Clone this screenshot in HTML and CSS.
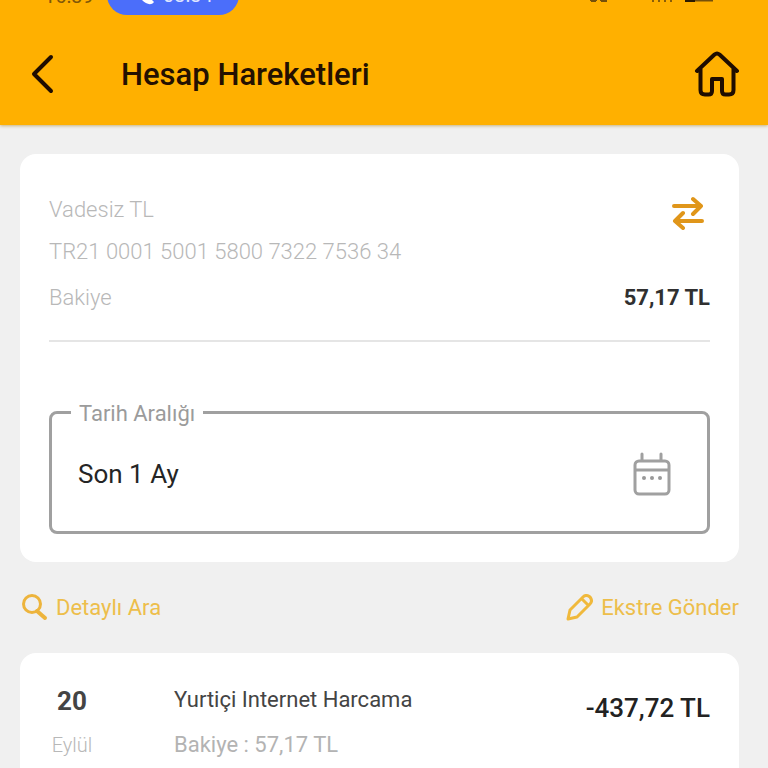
FILE: index.html
```html
<!DOCTYPE html>
<html lang="tr">
<head>
<meta charset="utf-8">
<meta name="viewport" content="width=device-width, initial-scale=1">
<title>Hesap Hareketleri</title>
<link rel="stylesheet" href="styles.css">
</head>
<body>
<header class="top">
  <div class="status">
    <span class="clock">16:39</span>
    <span class="call">
      <svg width="20" height="20" viewBox="0 0 20 20" aria-hidden="true"><path d="M4 1 C1 4 3 11 7 15 C11 19 16 21 19 17 L15 13 L12 15 L6 8 L8 5 Z" fill="#fff"/></svg>
      <span>03:34</span>
    </span>
    <svg class="signals" width="130" height="16" viewBox="0 0 130 16" aria-hidden="true"><path d="M5 3v11M10 3v11M15 3v11M20 3v11M5 14h5M15 14h6" stroke="#75500a" stroke-width="2" fill="none"/><path d="M67 8v7M73 6v9M79 4v11M85 2v13" stroke="#8a5e08" stroke-width="2"/><path d="M99 13h28" stroke="#75500a" stroke-width="3"/><path d="M99 13h10" stroke="#2b1a00" stroke-width="4"/></svg>
  </div>
  <nav class="bar">
    <button class="icon" type="button" aria-label="Geri"><svg width="24" height="40" viewBox="0 0 24 40"><path d="M21 3 4 20l17 17" fill="none" stroke="#1f0d00" stroke-width="4" stroke-linecap="round" stroke-linejoin="round"/></svg></button>
    <h1>Hesap Hareketleri</h1>
    <button class="icon" type="button" aria-label="Ana sayfa"><svg width="46" height="46" viewBox="0 0 46 46"><path d="M3 20 20.500 3.500Q23 1.500 25.500 3.500L43 20M6.500 17V39Q6.500 43.500 11 43.500H14.500Q18 43.500 18 40V28H28V40Q28 43.500 31.500 43.500H35Q39.500 43.500 39.500 39V17" fill="none" stroke="#1f0d00" stroke-width="4" stroke-linecap="round" stroke-linejoin="round"/></svg></button>
  </nav>
</header>
<main>
  <section class="card account">
    <div class="row first">
      <p class="muted">Vadesiz TL</p>
      <button class="icon" type="button" aria-label="Hesap değiştir"><svg width="32" height="34" viewBox="0 0 32 34"><path d="M2 10H29M21 3l8 7-8 8M30 25H3M11 17l-8 8 8 7" fill="none" stroke="#e0961a" stroke-width="4" stroke-linecap="round" stroke-linejoin="round"/></svg></button>
    </div>
    <p class="muted iban">TR21 0001 5001 5800 7322 7536 34</p>
    <div class="row balance">
      <p class="muted">Bakiye</p>
      <p class="sum">57,17 TL</p>
    </div>
    <fieldset class="range">
      <legend><label for="range">Tarih Aralığı</label></legend>
      <input id="range" type="text" value="Son 1 Ay" readonly>
      <button class="icon" type="button" aria-label="Takvim"><svg width="38" height="44" viewBox="0 0 38 44"><g fill="none" stroke="#a0a0a0" stroke-width="3" stroke-linecap="round"><rect x="2" y="9" width="34" height="33" rx="4"/><path d="M3 18H35M9 2V8M28 2V8"/></g><g fill="#999"><circle cx="11" cy="26" r="2"/><circle cx="19" cy="26" r="2"/><circle cx="27" cy="26" r="2"/></g></svg></button>
    </fieldset>
  </section>
  <div class="actions">
    <a href="#ara"><svg width="28" height="28" viewBox="0 0 28 28" aria-hidden="true"><path d="M17 17 25 24" stroke="#edb43c" stroke-width="4" stroke-linecap="round"/><circle cx="12" cy="10" r="8.500" fill="none" stroke="#edb43c" stroke-width="3"/></svg>Detaylı Ara</a>
    <a href="#ekstre"><svg width="28" height="28" viewBox="0 0 28 28" aria-hidden="true"><path d="M3 25 5 16 18 3Q21 0 25 3 28 7 25 10L12 23ZM17 5 23 11" fill="none" stroke="#f0b93c" stroke-width="3" stroke-linecap="round" stroke-linejoin="round"/></svg>Ekstre Gönder</a>
  </div>
  <article class="card entry">
    <div class="date"><strong>20</strong><span>Eylül</span></div>
    <div class="detail"><h2>Yurtiçi Internet Harcama</h2><p>Bakiye : 57,17 TL</p></div>
    <p class="amount">-437,72 TL</p>
  </article>
</main>
</body>
</html>
```
FILE: styles.css
```css
* { box-sizing: border-box; }
html { overflow-x: hidden; }
body { margin: 0; background: #f0f0f0; color: #222; font: 22px/28px Roboto, "Noto Sans", sans-serif; }
h1, h2, p { margin: 0; }
button { padding: 0; border: 0; background: none; }
svg { display: block; flex: none; }
input { font: inherit; color: inherit; }
.top { overflow: hidden; background: #ffb000; box-shadow: 0 1px 3px #c9b27c; }
.status { display: flex; align-items: flex-end; height: 15px; padding: 0 52px 0 44px; }
.clock { width: 63px; padding-bottom: 5px; color: #805708; font-size: 20px; }
.call { display: flex; align-items: flex-end; gap: 8px; width: 132px; height: 40px; padding: 0 20px 6px 28px; border-radius: 20px; background: #4b6efa; color: #dfe6ff; font-size: 20px; }
.call svg { margin-bottom: 4px; }
.signals { margin: 0 0 12px auto; }
.bar { display: flex; align-items: center; height: 110px; padding: 8px 28px 0 30px; }
.bar h1 { flex: 1; padding: 2px 0 0 67px; color: #241000; font-size: 31px; line-height: 36px; font-weight: 500; }
main { padding: 29px 29px 0 20px; }
.card { border-radius: 16px; background: #fff; }
.account { padding: 42px 29px 28px; }
.row { display: flex; align-items: flex-start; justify-content: space-between; }
.muted { color: #b8b8b8; font-weight: 300; }
.first { height: 34px; padding-right: 6px; }
.iban { padding-top: 8px; }
.balance { padding: 18px 0 28px; border-bottom: 2px solid #e5e5e5; }
.sum { font-weight: 700; color: #303030; }
.range { display: flex; align-items: center; min-width: 0; height: 134px; margin: 58px 0 0; padding: 0 36px 8px 26px; border: 3px solid #a0a0a0; border-radius: 8px; }
.range legend { margin-left: -7px; padding: 4px 8px 0; color: #9b9b9b; line-height: 20px; }
.range input { flex: 1; min-width: 0; padding: 0; border: 0; outline: 0; background: none; color: #252525; font-size: 26px; }
.actions { display: flex; justify-content: space-between; padding: 32px 0 31px; }
.actions a { display: flex; align-items: center; gap: 8px; color: #edbe4b; text-decoration: none; }
.entry { display: flex; align-items: flex-start; padding: 33px 29px 40px; }
.date { display: flex; flex-direction: column; align-items: center; gap: 16px; width: 46px; color: #b8b8b8; font-size: 20px; font-weight: 300; }
.date strong { padding-top: 1px; color: #444; font-size: 26px; font-weight: 700; }
.detail { flex: 1; padding-left: 79px; }
.detail h2 { color: #444; font-size: 22px; font-weight: 400; }
.detail p { padding-top: 17px; color: #b3b3b3; }
.amount { padding-top: 8px; font-size: 26px; font-weight: 500; }
```
